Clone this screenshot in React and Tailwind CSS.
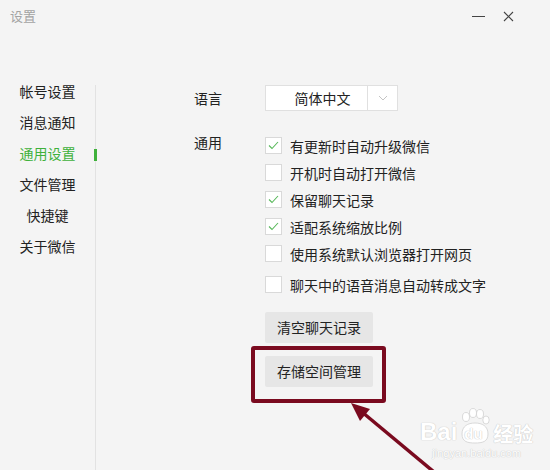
import React from "react";

const font = { fontFamily: '"Noto Sans CJK SC", "Noto Sans", sans-serif' };

function Check({ on }) {
  return (
    <div className="w-[17px] h-[17px] bg-white border border-[#d9d9d9] flex items-center justify-center shrink-0">
      {on && (
        <svg width="11" height="9" viewBox="0 0 11 9" fill="none">
          <path d="M1 4.5 L4 7.5 L10 1" stroke="#58b85a" strokeWidth="1.1" />
        </svg>
      )}
    </div>
  );
}

function Row({ on, text, extra = "" }) {
  return (
    <div className={`h-[27px] flex items-center gap-[8px] ${extra}`}>
      <Check on={on} />
      <span className="text-[14px] text-[#222] leading-none">{text}</span>
    </div>
  );
}

const side = ["帐号设置", "消息通知", "通用设置", "文件管理", "快捷键", "关于微信"];

export default function App() {
  return (
    <div className="w-[550px] h-[470px] bg-[#f4f4f4] relative overflow-hidden" style={font}>
      {/* title bar */}
      <div className="h-[32px] flex items-center justify-between pl-[10px] pr-[36px]">
        <span className="text-[13px] text-[#a3a3a3]">设置</span>
        <div className="flex items-center gap-[18px]">
          <div className="w-[13px] h-[1px] bg-[#444]" />
          <svg width="11" height="11" viewBox="0 0 11 11">
            <path d="M1 1 L10 10 M10 1 L1 10" stroke="#444" strokeWidth="1.1" />
          </svg>
        </div>
      </div>

      {/* body */}
      <div className="flex items-start mt-[44px]">
        <div className="w-[95px] flex flex-col">
          {side.map((s) => (
            <div
              key={s}
              className={`relative h-[31px] flex items-center justify-center text-[14px] ${
                s === "通用设置" ? "text-[#3fb13b]" : "text-[#222]"
              }`}
            >
              {s}
              {s === "通用设置" && (
                <div className="absolute right-[-2px] top-[11px] w-[3px] h-[12px] bg-[#3fb13b]" />
              )}
            </div>
          ))}
        </div>
        <div className="flex-1 border-l border-[#e2e2e2] mt-[9px] h-[400px] pl-[98px]">
          <div className="flex items-center h-[26px]">
            <span className="w-[71px] text-[14px] text-[#222]">语言</span>
            <div className="flex h-[26px] bg-white border border-[#e0e0e0]">
              <div className="w-[101px] flex items-center justify-center pl-[12px] text-[14px] text-[#222]">
                简体中文
              </div>
              <div className="w-[30px] border-l border-[#e0e0e0] flex items-center justify-center">
                <svg width="10" height="6" viewBox="0 0 10 6">
                  <path d="M1 1 L5 5 L9 1" stroke="#c4c4c4" strokeWidth="1" fill="none" />
                </svg>
              </div>
            </div>
          </div>

          <div className="flex mt-[21px]">
            <span className="w-[71px] text-[14px] text-[#222] leading-[20px]">通用</span>
            <div className="flex flex-col">
              <Row on text="有更新时自动升级微信" />
              <Row text="开机时自动打开微信" />
              <Row on text="保留聊天记录" />
              <Row on text="适配系统缩放比例" />
              <Row text="使用系统默认浏览器打开网页" />
              <Row text="聊天中的语音消息自动转成文字" extra="mt-[4px]" />
              <button className="mt-[14px] w-[108px] h-[31px] bg-[#e6e6e6] rounded-[2px] text-[14px] text-[#222]">
                清空聊天记录
              </button>
              <button className="mt-[13px] w-[108px] h-[31px] bg-[#e6e6e6] rounded-[2px] text-[14px] text-[#222]">
                存储空间管理
              </button>
            </div>
          </div>
        </div>
      </div>

      {/* annotation box */}
      <div className="absolute left-[251px] top-[346px] w-[135px] h-[57px] border-[4px] border-[#7a0a1f] rounded-[3px]" />

      {/* arrow */}
      <svg className="absolute left-0 top-0 pointer-events-none" width="550" height="470">
        <line x1="434" y1="472" x2="362" y2="412" stroke="#7a0a1f" strokeWidth="3.5" />
        <polygon points="351,403 370,409 360,421" fill="#7a0a1f" />
      </svg>

      {/* watermark */}
      <div className="absolute left-[420px] top-[408px] flex flex-col items-center text-white [text-shadow:0_0_1px_#c8c8c8,0_0_1px_#c8c8c8]">
        <div className="flex items-end">
          <span className="text-[24px] font-bold leading-none" style={{ fontFamily: '"Liberation Sans", sans-serif' }}>
            Bai
          </span>
          <div className="relative w-[34px] h-[36px] mx-[1px]">
            <svg className="absolute left-0 top-0" width="34" height="36" viewBox="0 0 34 36">
              <g fill="#ffffff" stroke="#d0d0d0" strokeWidth="0.8">
                <ellipse cx="8" cy="9" rx="3.5" ry="4.5" />
                <ellipse cx="15" cy="5" rx="3.5" ry="4.5" />
                <ellipse cx="22" cy="6" rx="3.5" ry="4.5" />
                <ellipse cx="28" cy="12" rx="3.2" ry="4" />
                <path d="M4 26 C4 18 10 15 17 15 C24 15 30 18 30 26 C30 34 24 35 17 35 C10 35 4 34 4 26 Z" />
              </g>
            </svg>
            <span
              className="absolute left-[6px] top-[18px] text-[15px] font-bold leading-none text-white"
              style={{ fontFamily: '"Liberation Sans", sans-serif' }}
            >
              du
            </span>
          </div>
          <span className="text-[20px] font-bold leading-none">经验</span>
        </div>
        <span className="text-[11px] leading-none mt-[4px] text-white" style={{ fontFamily: '"Liberation Sans", sans-serif' }}>
          jingyan.baidu.com
        </span>
      </div>
    </div>
  );
}
